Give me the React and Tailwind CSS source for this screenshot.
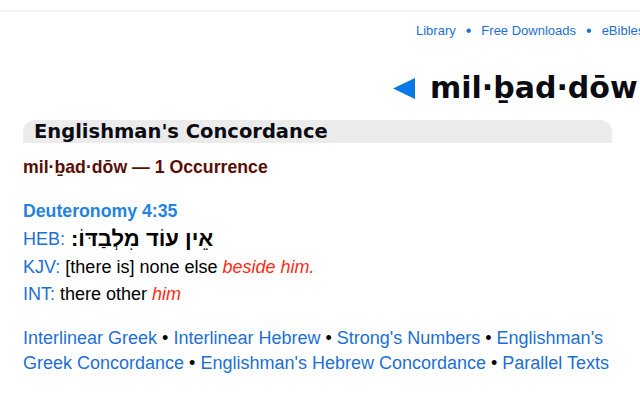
export default function App() {
  const links = [
    "Interlinear Greek",
    "Interlinear Hebrew",
    "Strong's Numbers",
    "Englishman's Greek Concordance",
    "Englishman's Hebrew Concordance",
    "Parallel Texts",
  ];

  return (
    <div className="w-[640px] h-[400px] overflow-hidden bg-white font-['Liberation_Sans',Arial,sans-serif]">
      {/* top rule */}
      <div className="mt-[10px] h-[2px] bg-[#f1f5f9]" />

      {/* nav */}
      <div className="mt-[11px] flex items-center whitespace-nowrap pl-[416px] text-[13px] leading-[16px] text-[#1c6fd6]">
        <span>Library</span>
        <span className="mx-[10px] text-[16px] text-[#1c6fd6]">•</span>
        <span>Free Downloads</span>
        <span className="mx-[10px] text-[16px] text-[#1c6fd6]">•</span>
        <span>eBibles</span>
      </div>

      {/* title */}
      <div className="mt-[34px] flex items-center whitespace-nowrap pl-[393px]">
        <svg width="22" height="21" viewBox="0 0 22 21" className="shrink-0">
          <polygon points="0,10.5 22,0 22,21" fill="#0a78e6" />
        </svg>
        <span className="ml-[15px] font-['DejaVu_Sans',Verdana,sans-serif] text-[30px] font-bold leading-[30px] text-[#0b0b14]">
          mil·ḇad·dōw
        </span>
      </div>

      {/* section header */}
      <div className="ml-[23px] mr-[28px] mt-[17px] h-[23px] rounded-t-[12px] bg-[#ebebeb] pl-[11px]">
        <span className="font-['DejaVu_Sans',Verdana,sans-serif] text-[19.5px] font-bold leading-[24px] text-[#0b0b14]">
          Englishman's Concordance
        </span>
      </div>

      <div className="pl-[23px] pr-[28px]">
        <div className="mt-[13px] text-[17.7px] font-bold leading-[22px] text-[#5a0d04]">
          mil·ḇad·dōw — 1 Occurrence
        </div>

        <div className="mt-[22px] text-[17.7px] font-bold leading-[22px] text-[#2383e2]">
          Deuteronomy 4:35
        </div>

        <div className="mt-[5px] flex items-center text-[18px] leading-[24px]">
          <span className="text-[#1c6fd6]">HEB:</span>
          <span
            dir="rtl"
            className="ml-[6px] font-['Liberation_Sans','DejaVu_Sans',sans-serif] text-[22px] font-bold leading-[24px] text-black"
          >
            אֵין עוֹד מִלְבַדּוֹ:
          </span>
        </div>

        <div className="mt-[4px] text-[18px] leading-[24px] text-black">
          <span className="text-[#1c6fd6]">KJV:</span> [there is] none else{" "}
          <i className="text-[#ff2a10]">beside him.</i>
        </div>

        <div className="mt-[3px] text-[18px] leading-[24px] text-black">
          <span className="text-[#1c6fd6]">INT:</span> there other{" "}
          <i className="text-[#ff2a10]">him</i>
        </div>

        <div className="mt-[20px] text-[18px] leading-[25px] text-[#1c6fd6]">
          {links.map((l, i) => (
            <span key={l}>
              {l}
              {i < links.length - 1 && <span className="text-black"> • </span>}
            </span>
          ))}
        </div>
      </div>
    </div>
  );
}
